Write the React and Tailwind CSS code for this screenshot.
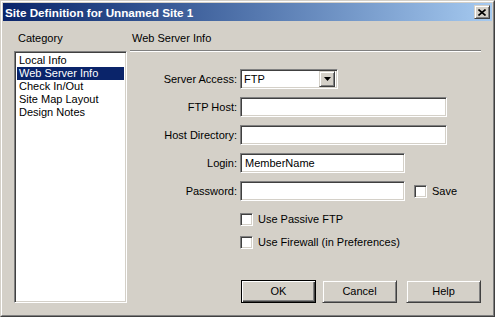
const raised =
  'border border-t-[#d4d0c8] border-l-[#d4d0c8] border-r-[#404040] border-b-[#404040] shadow-[inset_1px_1px_0_#ffffff,inset_-1px_-1px_0_#808080] bg-[#d4d0c8]';
const sunken =
  'border border-t-[#808080] border-l-[#808080] border-r-white border-b-white shadow-[inset_1px_1px_0_#404040,inset_-1px_-1px_0_#d4d0c8] bg-white';

const Field = ({ label, width, value, children }) => (
  <div className="flex items-center h-[20px]">
    <div className="w-[108px] text-right pr-[1px]">{label}</div>
    <div className={`ml-[2px] h-[20px] ${width} ${sunken} flex items-center pl-[4px]`}>
      {value}
    </div>
    {children}
  </div>
);

const Check = ({ label, className = '' }) => (
  <div className={`flex items-center ${className}`}>
    <div className={`w-[13px] h-[13px] ${sunken}`} />
    <span className="ml-[5px]">{label}</span>
  </div>
);

const Button = ({ label, primary, className = '' }) => (
  <div
    className={`w-[75px] h-[23px] flex items-center justify-center ${
      primary ? 'outline outline-1 outline-black -outline-offset-1' : ''
    } ${className}`}
  >
    <div
      className={`w-full h-full flex items-center justify-center ${
        primary
          ? 'border border-black shadow-[inset_1px_1px_0_#ffffff,inset_-1px_-1px_0_#404040,inset_-2px_-2px_0_#808080] bg-[#d4d0c8]'
          : raised
      }`}
    >
      {label}
    </div>
  </div>
);

export default function App() {
  const items = ['Local Info', 'Web Server Info', 'Check In/Out', 'Site Map Layout', 'Design Notes'];

  return (
    <div
      className="w-[495px] h-[317px] bg-[#d4d0c8] text-black text-[11px] leading-[13px] border border-t-[#d4d0c8] border-l-[#d4d0c8] border-r-[#404040] border-b-[#404040]"
      style={{ fontFamily: '"Liberation Sans", Arial, sans-serif' }}
    >
      <div className="w-full h-full border border-t-white border-l-white border-r-[#808080] border-b-[#808080] p-px flex flex-col">
        {/* title bar */}
        <div className="h-[18px] bg-gradient-to-r from-[#0a246a] to-[#a6caf0] flex items-center pl-[2px] pr-[2px]">
          <span className="text-white font-bold text-[11.7px] tracking-[0px]">Site Definition for Unnamed Site 1</span>
          <div className={`ml-auto w-[16px] h-[14px] ${raised} flex items-center justify-center`}>
            <svg width="8" height="7" viewBox="0 0 8 7">
              <path d="M0.5 0.5 L7.5 6.5 M7.5 0.5 L0.5 6.5" stroke="black" strokeWidth="1.6" />
            </svg>
          </div>
        </div>

        {/* body */}
        <div className="flex flex-1 pt-[11px]">
          {/* category column */}
          <div className="w-[129px] pl-[11px] flex flex-col">
            <div className="pl-[4px]">Category</div>
            <div className={`mt-[6px] w-[113px] h-[252px] ${sunken} p-[2px] pt-[2px]`}>
              {items.map((it, i) => (
                <div
                  key={it}
                  className={`h-[13px] pl-[2px] leading-[13px] ${
                    i === 1 ? 'bg-[#0a246a] text-white' : ''
                  }`}
                >
                  {it}
                </div>
              ))}
            </div>
          </div>

          {/* web server info */}
          <div className="flex-1 pr-[11px] flex flex-col">
            <div className="pl-[2px]">Web Server Info</div>
            <div className="mt-[5px] h-[2px] border-t border-t-[#808080] border-b border-b-white" />

            <div className="mt-[17px] flex flex-col gap-[8px]">
              <div className="flex items-center h-[20px]">
                <div className="w-[108px] text-right pr-[1px]">Server Access:</div>
                <div className={`ml-[2px] h-[20px] w-[98px] ${sunken} flex items-center pl-[3px] pr-[2px]`}>
                  <span>FTP</span>
                  <div className={`ml-auto w-[16px] h-[16px] ${raised} flex items-center justify-center`}>
                    <svg width="7" height="4" viewBox="0 0 7 4">
                      <path d="M0 0 H7 L3.5 4 Z" fill="black" />
                    </svg>
                  </div>
                </div>
              </div>
              <Field label="FTP Host:" width="w-[207px]" />
              <Field label="Host Directory:" width="w-[207px]" />
              <Field label="Login:" width="w-[165px]" value="MemberName" />
              <Field label="Password:" width="w-[165px]">
                <Check label="Save" className="ml-[9px]" />
              </Field>
            </div>

            <div className="pl-[110px] mt-[12px] flex flex-col gap-[10px]">
              <Check label="Use Passive FTP" />
              <Check label="Use Firewall (in Preferences)" />
            </div>

            <div className="pl-[111px] mt-[31px] flex">
              <Button label="OK" primary />
              <Button label="Cancel" className="ml-[6px]" />
              <Button label="Help" className="ml-[9px]" />
            </div>
          </div>
        </div>
      </div>
    </div>
  );
}
